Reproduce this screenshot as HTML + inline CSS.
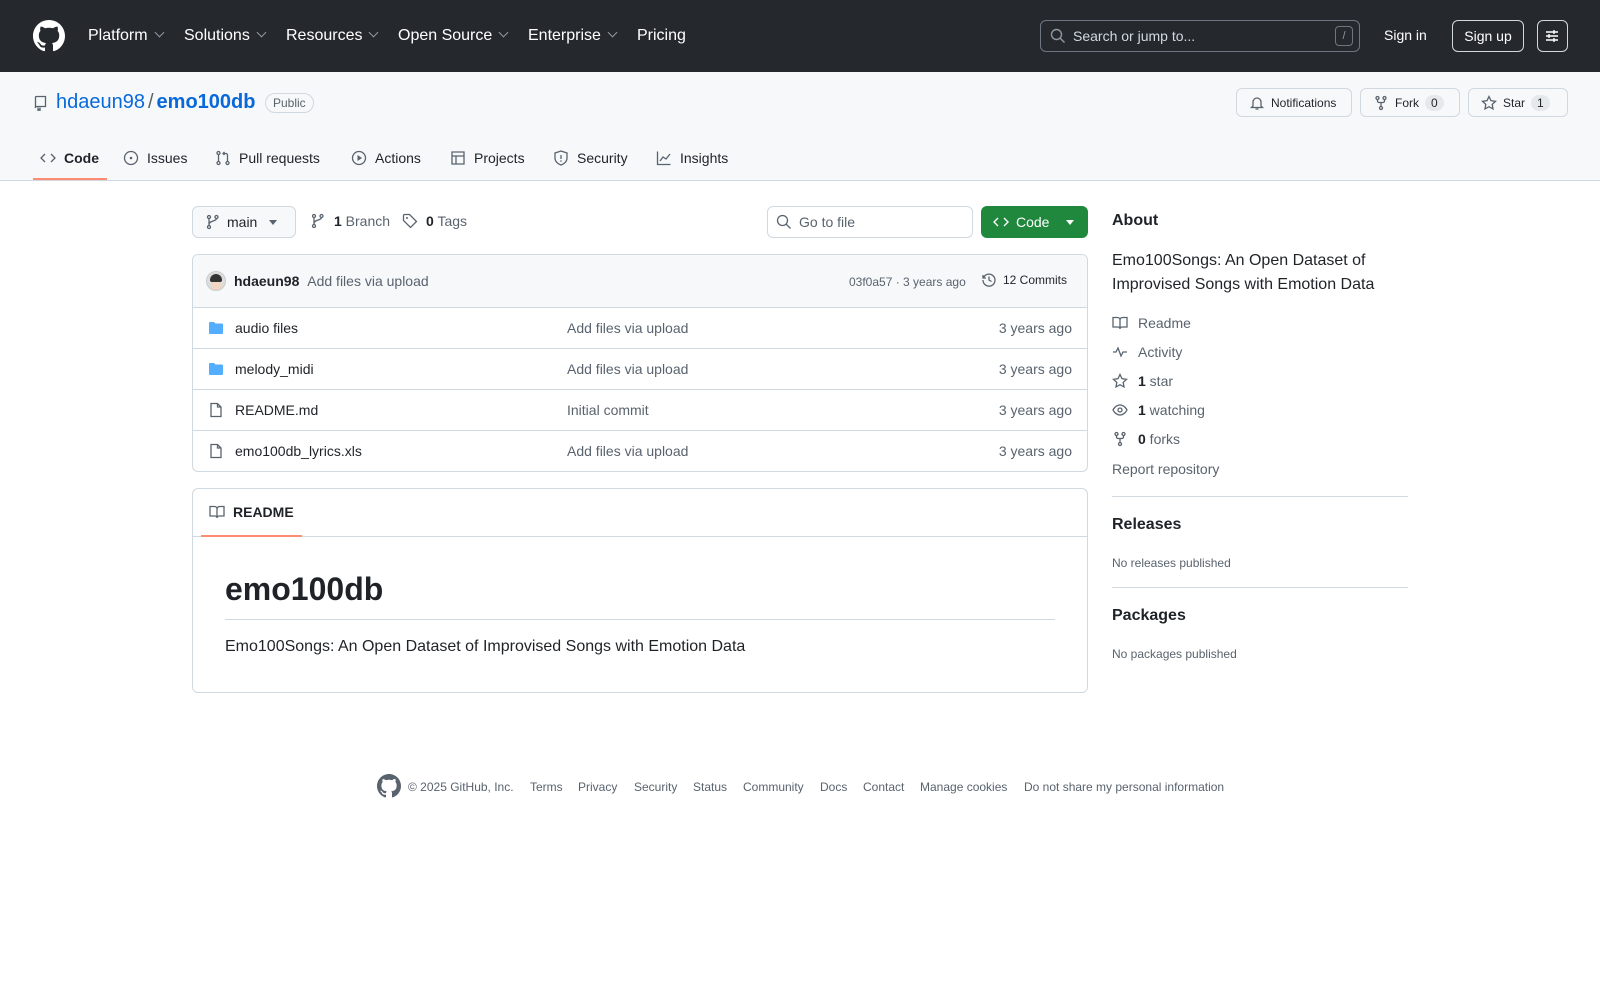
<!DOCTYPE html>
<html><head><meta charset="utf-8"><style>
*{box-sizing:border-box;margin:0;padding:0}
body{width:1600px;height:1000px;background:#fff;font-family:"Liberation Sans",sans-serif;color:#1f2328;font-size:14px;position:relative;overflow:hidden}
.a{position:absolute;white-space:nowrap}
svg{display:inline-block;vertical-align:middle}
.hdr{position:absolute;left:0;top:0;width:1600px;height:72px;background:#25292e}
.nav{color:#fff;font-size:16px;top:27px}
.chev{display:inline-block;width:7px;height:7px;border-right:1.3px solid #9198a1;border-bottom:1.3px solid #9198a1;transform:rotate(45deg);margin-left:8px;position:relative;top:-4px}
.sub{position:absolute;left:0;top:72px;width:1600px;height:109px;background:#f6f8fa;border-bottom:1px solid #d1d9e0}
.btn{position:absolute;border:1px solid #d1d9e0;border-radius:6px;background:#f6f8fa;font-size:12px;display:flex;align-items:center;gap:6px;padding:0 12px;color:#1f2328}
.cnt{background:#e6e9ec;border-radius:10px;padding:1px 6px;font-size:12px}
.tab{top:150px;font-size:14px;display:flex;align-items:center;gap:8px}
.ic{stroke:#59636e;fill:none;stroke-width:1.3}
.row{position:absolute;left:192px;width:896px;height:41px;border-top:1px solid #d1d9e0;font-size:14px}
.row span{position:absolute;top:12px}
.side{font-size:14px;color:#59636e;left:1112px;display:flex;align-items:center;gap:10px}
.side b{color:#1f2328}
.ft{top:780px;font-size:12px;color:#59636e}
</style></head><body>
<div class="hdr"></div>
<svg class="a" style="left:33px;top:20px" width="32" height="32" viewBox="0 0 16 16"><path fill="#fff" d="M8 0C3.58 0 0 3.58 0 8c0 3.54 2.290 6.53 5.47 7.59.4.07.55-.17.55-.38 0-.19-.01-.82-.01-1.49-2.01.37-2.53-.49-2.690-.94-.09-.23-.48-.94-.82-1.130-.28-.15-.68-.52-.01-.53.63-.01 1.08.58 1.23.82.72 1.21 1.87.87 2.33.66.07-.52.28-.87.51-1.07-1.78-.2-3.64-.89-3.64-3.95 0-.87.31-1.59.82-2.15-.08-.2-.36-1.02.08-2.12 0 0 .67-.21 2.2.82.64-.18 1.32-.27 2-.27.68 0 1.36.09 2 .27 1.53-1.04 2.2-.82 2.2-.82.44 1.1.16 1.92.08 2.12.51.56.82 1.27.82 2.15 0 3.07-1.87 3.75-3.65 3.95.29.25.54.73.54 1.48 0 1.07-.01 1.93-.01 2.2 0 .21.15.46.55.38A8.013 8.013 0 0016 8c0-4.42-3.58-8-8-8z"/></svg>
<div class="a nav" style="left:88px">Platform<i class="chev"></i></div>
<div class="a nav" style="left:184px">Solutions<i class="chev"></i></div>
<div class="a nav" style="left:286px">Resources<i class="chev"></i></div>
<div class="a nav" style="left:398px">Open Source<i class="chev"></i></div>
<div class="a nav" style="left:528px">Enterprise<i class="chev"></i></div>
<div class="a nav" style="left:637px">Pricing</div>
<div class="a" style="left:1040px;top:20px;width:320px;height:32px;border:1px solid #6e7681;border-radius:6px"></div>
<svg class="a" style="left:1050px;top:28px" width="16" height="16" viewBox="0 0 16 16"><circle cx="6.5" cy="6.5" r="5" stroke="#9198a1" stroke-width="1.4" fill="none"/><path d="M10.2 10.2L14.5 14.5" stroke="#9198a1" stroke-width="1.4"/></svg>
<div class="a" style="left:1073px;top:28px;font-size:14px;color:#d1d9e0">Search or jump to...</div>
<div class="a" style="left:1335px;top:26px;width:18px;height:20px;border:1px solid #6e7681;border-radius:4px;color:#9198a1;font-size:11px;text-align:center;line-height:18px">/</div>
<div class="a" style="left:1384px;top:27px;color:#fff;font-size:14px">Sign in</div>
<div class="a" style="left:1452px;top:20px;width:72px;height:32px;border:1px solid #d1d9e0;border-radius:6px;color:#fff;font-size:14px;text-align:center;line-height:30px">Sign up</div>
<div class="a" style="left:1537px;top:20px;width:31px;height:32px;border:1px solid #d1d9e0;border-radius:6px"></div>
<svg class="a" style="left:1544px;top:28px" width="16" height="16" viewBox="0 0 16 16" stroke="#fff" stroke-width="1.4"><path d="M2 4h12M2 8h12M2 12h12M10 2v4M5 6v4M10 10v4"/></svg>

<div class="sub"></div>
<svg class="a" style="left:32px;top:95px" width="16" height="16" viewBox="0 0 16 16"><path class="ic" d="M3.5 13V2.5A1 1 0 014.5 1.5h9v10h-9a1 1 0 00-1 1.5M6 12.5v3l1-1 1 1v-3"/></svg>
<div class="a" style="left:56px;top:91px;font-size:20px;color:#0969da">hdaeun98<span style="color:#59636e;margin:0 3px">/</span><b>emo100db</b></div>
<div class="a" style="left:265px;top:93px;border:1px solid #d1d9e0;border-radius:12px;font-size:12px;color:#59636e;padding:2px 7px">Public</div>
<div class="btn" style="left:1236px;top:88px;width:116px;height:29px"><svg width="16" height="16" viewBox="0 0 16 16"><path class="ic" d="M4 11V7a4 4 0 018 0v4l1.5 1.5h-11zM6.5 14h3"/></svg>Notifications</div>
<div class="btn" style="left:1360px;top:88px;width:100px;height:29px"><svg width="16" height="16" viewBox="0 0 16 16"><g class="ic"><circle cx="4.5" cy="3" r="1.5"/><circle cx="11.5" cy="3" r="1.5"/><circle cx="8" cy="13" r="1.5"/><path d="M4.5 4.5v1.5a1.5 1.5 0 001.5 1.5h4a1.5 1.5 0 001.5-1.5V4.5M8 7.5v4"/></g></svg>Fork <span class="cnt">0</span></div>
<div class="btn" style="left:1468px;top:88px;width:100px;height:29px"><svg width="16" height="16" viewBox="0 0 16 16"><path class="ic" d="M8 1.5l2 4.2 4.5.6-3.3 3.1.8 4.5L8 11.7l-4 2.2.8-4.5L1.5 6.3 6 5.7z"/></svg>Star <span class="cnt">1</span></div>

<div class="a tab" style="left:40px"><svg width="16" height="16" viewBox="0 0 16 16"><path class="ic" d="M5 4L1 8l4 4M11 4l4 4-4 4"/></svg><b>Code</b></div>
<div class="a" style="left:33px;top:178px;width:74px;height:2px;background:#fd8c73"></div>
<div class="a tab" style="left:123px"><svg width="16" height="16" viewBox="0 0 16 16"><circle class="ic" cx="8" cy="8" r="6.5"/><circle cx="8" cy="8" r="1.3" fill="#59636e"/></svg>Issues</div>
<div class="a tab" style="left:215px"><svg width="16" height="16" viewBox="0 0 16 16"><g class="ic"><circle cx="3.5" cy="3" r="1.5"/><circle cx="3.5" cy="13" r="1.5"/><circle cx="12.5" cy="13" r="1.5"/><path d="M3.5 4.5v7M12.5 11.5V5a1.5 1.5 0 00-1.5-1.5H8M9.5 2L8 3.5 9.5 5"/></g></svg>Pull requests</div>
<div class="a tab" style="left:351px"><svg width="16" height="16" viewBox="0 0 16 16"><circle class="ic" cx="8" cy="8" r="6.5"/><path d="M6.5 5v6l4.5-3z" fill="#59636e"/></svg>Actions</div>
<div class="a tab" style="left:450px"><svg width="16" height="16" viewBox="0 0 16 16"><path class="ic" d="M2 2h12v12H2zM2 6h12M6 6v8"/></svg>Projects</div>
<div class="a tab" style="left:553px"><svg width="16" height="16" viewBox="0 0 16 16"><path class="ic" d="M8 1l6 2v5c0 3.5-3 6-6 7-3-1-6-3.5-6-7V3zM8 5v4"/><circle cx="8" cy="11" r=".8" fill="#59636e"/></svg>Security</div>
<div class="a tab" style="left:656px"><svg width="16" height="16" viewBox="0 0 16 16"><path class="ic" d="M1.5 1.5v13h13M4 11l3-4 3 2 4-5"/></svg>Insights</div>

<div class="btn" style="left:192px;top:206px;width:104px;height:32px;font-size:14px"><svg width="16" height="16" viewBox="0 0 16 16"><g class="ic"><circle cx="4" cy="3" r="1.5"/><circle cx="4" cy="13" r="1.5"/><circle cx="11.5" cy="3" r="1.5"/><path d="M4 4.5v7M11.5 4.5c0 3-7.5 2-7.5 6"/></g></svg>main<span style="margin-left:6px;border:4px solid transparent;border-top:5px solid #59636e;margin-top:5px"></span></div>
<div class="a" style="left:310px;top:213px;font-size:14px;color:#59636e;display:flex;gap:8px;align-items:center"><svg width="16" height="16" viewBox="0 0 16 16"><g class="ic"><circle cx="4" cy="3" r="1.5"/><circle cx="4" cy="13" r="1.5"/><circle cx="11.5" cy="3" r="1.5"/><path d="M4 4.5v7M11.5 4.5c0 3-7.5 2-7.5 6"/></g></svg><span><b style="color:#1f2328">1</b> Branch</span><svg style="margin-left:4px" width="16" height="16" viewBox="0 0 16 16"><path class="ic" d="M1.5 2.5v5l7 7 6-6-7-7h-5a1 1 0 00-1 1z"/><circle cx="5" cy="5" r="1" fill="#59636e"/></svg><span><b style="color:#1f2328">0</b> Tags</span></div>
<div class="a" style="left:767px;top:206px;width:206px;height:32px;border:1px solid #d1d9e0;border-radius:6px"></div>
<svg class="a" style="left:776px;top:214px" width="16" height="16" viewBox="0 0 16 16"><circle class="ic" cx="6.5" cy="6.5" r="5"/><path class="ic" d="M10.2 10.2l4.3 4.3"/></svg>
<div class="a" style="left:799px;top:214px;font-size:14px;color:#59636e">Go to file</div>
<div class="a" style="left:981px;top:206px;width:107px;height:32px;background:#1f883d;border-radius:6px;color:#fff;font-size:14px;display:flex;align-items:center;padding-left:12px;gap:7px"><svg width="16" height="16" viewBox="0 0 16 16"><path d="M5 4L1 8l4 4M11 4l4 4-4 4" stroke="#fff" stroke-width="1.4" fill="none"/></svg>Code<span style="margin-left:10px;border:4px solid transparent;border-top:5px solid #fff;margin-top:5px"></span></div>

<div class="a" style="left:192px;top:254px;width:896px;height:218px;border:1px solid #d1d9e0;border-radius:6px;overflow:hidden">
<div style="height:53px;background:#f6f8fa"></div></div>
<div class="a" style="left:206px;top:271px;width:20px;height:20px;border-radius:50%;background:#ddd;border:1px solid #ccc;overflow:hidden"><div style="width:12px;height:8px;background:#333;margin:2px auto 0;border-radius:6px 6px 2px 2px"></div><div style="width:10px;height:8px;background:#f1d6c4;margin:0 auto"></div></div>
<div class="a" style="left:234px;top:273px;font-size:14px"><b>hdaeun98</b> <span style="color:#59636e;margin-left:4px">Add files via upload</span></div>
<div class="a" style="left:849px;top:275px;font-size:12px;color:#59636e">03f0a57 · 3 years ago</div>
<div class="a" style="left:981px;top:272px;font-size:12px;display:flex;gap:6px;align-items:center"><svg width="16" height="16" viewBox="0 0 16 16"><path class="ic" d="M2 3v3h3M2.4 6A6 6 0 112 8M8 4.5V8l2.5 1.5"/></svg>12 Commits</div>
<div class="row" style="top:307px"><svg class="a" style="left:16px;top:12px" width="16" height="16" viewBox="0 0 16 16"><path fill="#54aeff" d="M1 3a1 1 0 011-1h4l1.5 1.5H14a1 1 0 011 1V13a1 1 0 01-1 1H2a1 1 0 01-1-1z"/></svg><span style="left:43px">audio files</span><span style="left:375px;color:#59636e">Add files via upload</span><span style="right:16px;color:#59636e">3 years ago</span></div>
<div class="row" style="top:348px"><svg class="a" style="left:16px;top:12px" width="16" height="16" viewBox="0 0 16 16"><path fill="#54aeff" d="M1 3a1 1 0 011-1h4l1.5 1.5H14a1 1 0 011 1V13a1 1 0 01-1 1H2a1 1 0 01-1-1z"/></svg><span style="left:43px">melody_midi</span><span style="left:375px;color:#59636e">Add files via upload</span><span style="right:16px;color:#59636e">3 years ago</span></div>
<div class="row" style="top:389px"><svg class="a" style="left:16px;top:12px" width="16" height="16" viewBox="0 0 16 16"><path class="ic" d="M3 1.5h6.5l3.5 3.5v9.5H3zM9.5 1.5V5H13"/></svg><span style="left:43px">README.md</span><span style="left:375px;color:#59636e">Initial commit</span><span style="right:16px;color:#59636e">3 years ago</span></div>
<div class="row" style="top:430px"><svg class="a" style="left:16px;top:12px" width="16" height="16" viewBox="0 0 16 16"><path class="ic" d="M3 1.5h6.5l3.5 3.5v9.5H3zM9.5 1.5V5H13"/></svg><span style="left:43px">emo100db_lyrics.xls</span><span style="left:375px;color:#59636e">Add files via upload</span><span style="right:16px;color:#59636e">3 years ago</span></div>

<div class="a" style="left:192px;top:488px;width:896px;height:205px;border:1px solid #d1d9e0;border-radius:6px"></div>
<div class="a" style="left:192px;top:536px;width:896px;height:1px;background:#d1d9e0"></div>
<div class="a" style="left:201px;top:535px;width:101px;height:2px;background:#fd8c73"></div>
<div class="a" style="left:209px;top:504px;font-size:14px;display:flex;gap:8px;align-items:center"><svg width="16" height="16" viewBox="0 0 16 16"><path class="ic" d="M1 2.5h4.5A2.5 2.5 0 018 5v9a2 2 0 00-2-2H1zM15 2.5h-4.5A2.5 2.5 0 008 5v9a2 2 0 012-2h5z"/></svg><b>README</b></div>
<div class="a" style="left:225px;top:571px;font-size:32px;font-weight:bold">emo100db</div>
<div class="a" style="left:225px;top:619px;width:830px;height:1px;background:#d1d9e0"></div>
<div class="a" style="left:225px;top:638px;font-size:16px">Emo100Songs: An Open Dataset of Improvised Songs with Emotion Data</div>

<div class="a" style="left:1112px;top:212px;font-size:16px;font-weight:bold">About</div>
<div class="a" style="left:1112px;top:249px;font-size:16px;line-height:24px;white-space:normal;width:296px">Emo100Songs: An Open Dataset of Improvised Songs with Emotion Data</div>
<div class="a side" style="top:315px"><svg width="16" height="16" viewBox="0 0 16 16"><path class="ic" d="M1 2.5h4.5A2.5 2.5 0 018 5v9a2 2 0 00-2-2H1zM15 2.5h-4.5A2.5 2.5 0 008 5v9a2 2 0 012-2h5z"/></svg>Readme</div>
<div class="a side" style="top:344px"><svg width="16" height="16" viewBox="0 0 16 16"><path class="ic" d="M1 8h3l2-4 3 8 2-4h4"/></svg>Activity</div>
<div class="a side" style="top:373px"><svg width="16" height="16" viewBox="0 0 16 16"><path class="ic" d="M8 1.5l2 4.2 4.5.6-3.3 3.1.8 4.5L8 11.7l-4 2.2.8-4.5L1.5 6.3 6 5.7z"/></svg><span><b>1</b> star</span></div>
<div class="a side" style="top:402px"><svg width="16" height="16" viewBox="0 0 16 16"><path class="ic" d="M1 8s2.5-5 7-5 7 5 7 5-2.5 5-7 5-7-5-7-5z"/><circle class="ic" cx="8" cy="8" r="2"/></svg><span><b>1</b> watching</span></div>
<div class="a side" style="top:431px"><svg width="16" height="16" viewBox="0 0 16 16"><g class="ic"><circle cx="4.5" cy="3" r="1.5"/><circle cx="11.5" cy="3" r="1.5"/><circle cx="8" cy="13" r="1.5"/><path d="M4.5 4.5v1.5a1.5 1.5 0 001.5 1.5h4a1.5 1.5 0 001.5-1.5V4.5M8 7.5v4"/></g></svg><span><b>0</b> forks</span></div>
<div class="a side" style="top:461px">Report repository</div>
<div class="a" style="left:1112px;top:496px;width:296px;height:1px;background:#d1d9e0"></div>
<div class="a" style="left:1112px;top:516px;font-size:16px;font-weight:bold">Releases</div>
<div class="a" style="left:1112px;top:556px;font-size:12px;color:#59636e">No releases published</div>
<div class="a" style="left:1112px;top:587px;width:296px;height:1px;background:#d1d9e0"></div>
<div class="a" style="left:1112px;top:607px;font-size:16px;font-weight:bold">Packages</div>
<div class="a" style="left:1112px;top:647px;font-size:12px;color:#59636e">No packages published</div>

<svg class="a" style="left:377px;top:774px" width="24" height="24" viewBox="0 0 16 16"><path fill="#59636e" d="M8 0C3.58 0 0 3.58 0 8c0 3.54 2.29 6.53 5.47 7.59.4.07.55-.17.55-.38 0-.19-.01-.82-.01-1.49-2.01.37-2.53-.49-2.69-.94-.09-.23-.48-.94-.82-1.13-.28-.15-.68-.52-.01-.53.63-.01 1.08.58 1.23.82.72 1.21 1.87.87 2.33.66.07-.52.28-.87.51-1.07-1.78-.2-3.64-.89-3.64-3.95 0-.87.31-1.59.82-2.15-.08-.2-.36-1.02.08-2.12 0 0 .67-.21 2.2.82.64-.18 1.32-.27 2-.27.68 0 1.36.09 2 .27 1.53-1.04 2.2-.82 2.2-.82.44 1.1.16 1.92.08 2.12.51.56.82 1.27.82 2.15 0 3.07-1.87 3.75-3.65 3.95.29.25.54.73.54 1.48 0 1.07-.01 1.93-.01 2.2 0 .21.15.46.55.38A8.013 8.013 0 0016 8c0-4.42-3.58-8-8-8z"/></svg>
<div class="a ft" style="left:408px">© 2025 GitHub, Inc.</div>
<div class="a ft" style="left:530px">Terms</div>
<div class="a ft" style="left:578px">Privacy</div>
<div class="a ft" style="left:634px">Security</div>
<div class="a ft" style="left:693px">Status</div>
<div class="a ft" style="left:743px">Community</div>
<div class="a ft" style="left:820px">Docs</div>
<div class="a ft" style="left:863px">Contact</div>
<div class="a ft" style="left:920px">Manage cookies</div>
<div class="a ft" style="left:1024px">Do not share my personal information</div>
</body></html>
